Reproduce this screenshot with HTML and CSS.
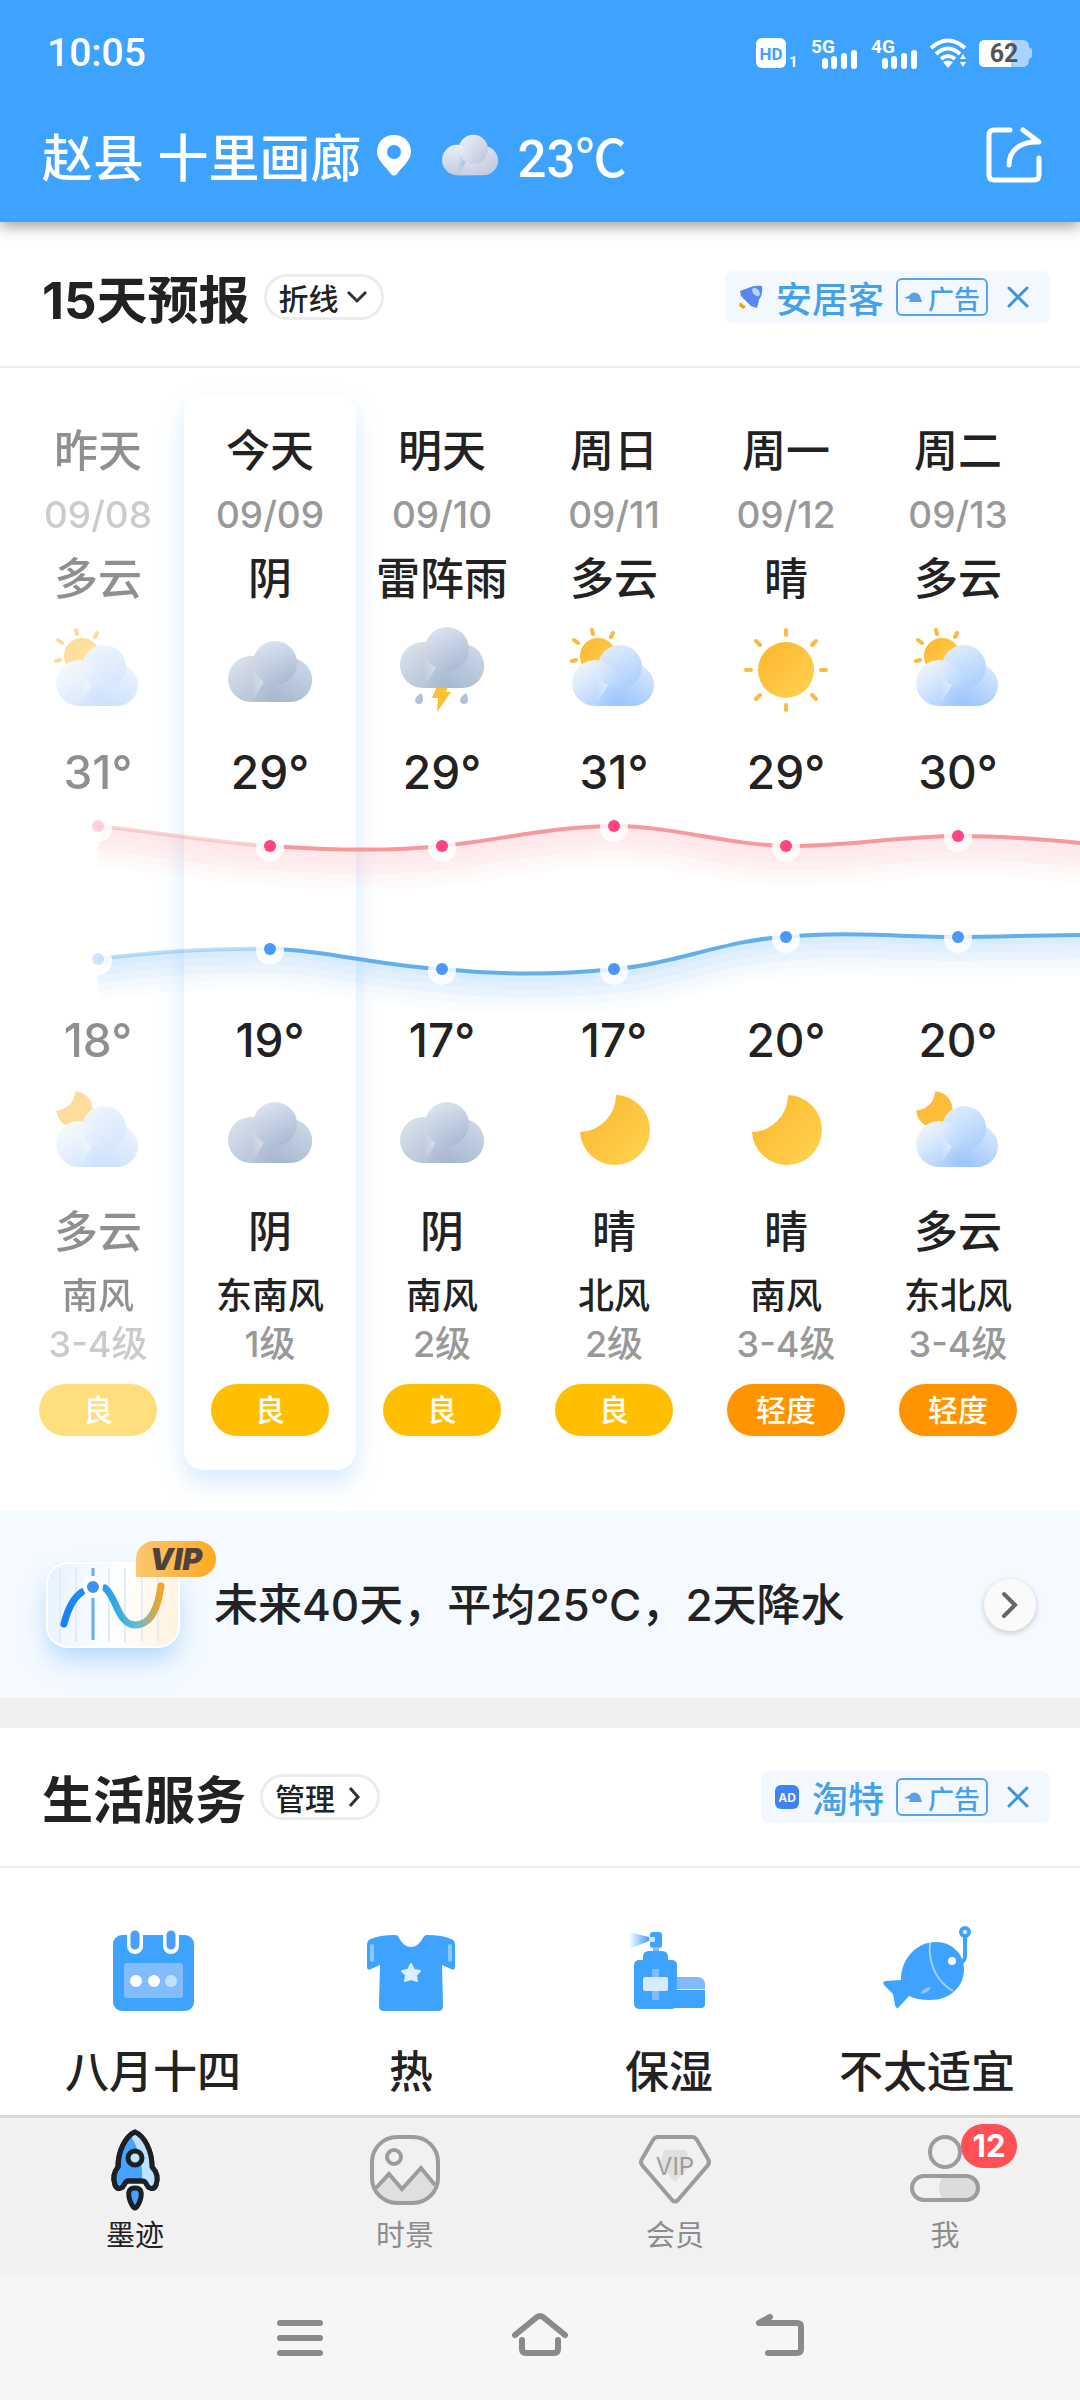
FILE: index.html
```html
<!DOCTYPE html>
<html lang="zh-CN">
<head>
  <meta charset="UTF-8">
  <meta name="viewport" content="width=device-width, initial-scale=1.0">
  <title>15天预报</title>
  <link rel="stylesheet" href="styles.css">
</head>
<body>
  <!-- Shared weather icons -->
  <svg class="sprite" aria-hidden="true">
    <defs>
      <linearGradient id="sun-fill" x1="0" y1="0" x2="1" y2="1">
        <stop offset="0" stop-color="#fdb52c"/>
        <stop offset="1" stop-color="#ffd452"/>
      </linearGradient>
      <linearGradient id="grey-mid" x1="0.3" y1="0" x2="0.7" y2="1">
        <stop offset="0" stop-color="#dbe4f1"/>
        <stop offset="1" stop-color="#a9b9d2"/>
      </linearGradient>
      <linearGradient id="grey-left" gradientUnits="userSpaceOnUse" x1="12" y1="30" x2="52" y2="78">
        <stop offset="0" stop-color="#dae1eb"/>
        <stop offset="1" stop-color="#a8b9d1"/>
      </linearGradient>
      <linearGradient id="grey-right" gradientUnits="userSpaceOnUse" x1="80" y1="34" x2="55" y2="76">
        <stop offset="0" stop-color="#cbd8e7"/>
        <stop offset="1" stop-color="#a8b9d1"/>
      </linearGradient>
      <linearGradient id="left-fade" gradientUnits="userSpaceOnUse" x1="26" y1="0" x2="54" y2="0">
        <stop offset="0" stop-color="#fff"/>
        <stop offset="1" stop-color="#000"/>
      </linearGradient>
      <mask id="soft-left" maskUnits="userSpaceOnUse" x="0" y="0" width="88" height="88">
        <rect width="88" height="88" fill="url(#left-fade)"/>
      </mask>
      <linearGradient id="blue-mid" x1="0.2" y1="0" x2="0.7" y2="1">
        <stop offset="0" stop-color="#e0eefe"/>
        <stop offset="1" stop-color="#abcefd"/>
      </linearGradient>
      <linearGradient id="blue-left" gradientUnits="userSpaceOnUse" x1="16" y1="32" x2="50" y2="82">
        <stop offset="0" stop-color="#f4f5f2"/>
        <stop offset="0.3" stop-color="#dbeafe"/>
        <stop offset="1" stop-color="#9dc5fc"/>
      </linearGradient>
      <linearGradient id="blue-right" gradientUnits="userSpaceOnUse" x1="80" y1="38" x2="55" y2="80">
        <stop offset="0" stop-color="#dcebff"/>
        <stop offset="1" stop-color="#9dc5fc"/>
      </linearGradient>
    </defs>
    <symbol id="cloud" viewBox="0 0 88 88">
      <path d="M26 76H64A22 22 0 1 0 44 45Z" fill="url(#grey-right)"/>
      <circle cx="49" cy="37" r="22" fill="url(#grey-mid)"/>
      <path d="M25 76A23 23 0 1 1 48 53L54 76Z" fill="url(#grey-left)" mask="url(#soft-left)"/>
    </symbol>
    <symbol id="blue-cloud" viewBox="0 0 88 88">
      <path d="M25 80H64A21 21 0 1 0 44 50Z" fill="url(#blue-right)"/>
      <circle cx="50" cy="41" r="22" fill="url(#blue-mid)"/>
      <path d="M25 80A23 23 0 1 1 48 57L56 80Z" fill="url(#blue-left)" mask="url(#soft-left)"/>
    </symbol>
    <symbol id="partly-day" viewBox="0 0 88 88">
      <circle cx="28" cy="30" r="18" fill="url(#sun-fill)"/>
      <path d="M4 14l4 3M22 4l1 4M43 7l-2 4M2 35l4-1" stroke="#fcb941" stroke-width="4" stroke-linecap="round"/>
      <use href="#blue-cloud"/>
    </symbol>
    <symbol id="partly-night" viewBox="0 0 88 88">
      <path transform="translate(-3 0) scale(.52)" d="M46 8A35 35 0 1 1 10 45A37 37 0 0 0 46 8Z" fill="#fdbd3a"/>
      <use href="#blue-cloud"/>
    </symbol>
    <symbol id="moon" viewBox="0 0 88 88">
      <path d="M46 8A35 35 0 1 1 10 45A37 37 0 0 0 46 8Z" fill="url(#sun-fill)"/>
    </symbol>
    <symbol id="sun" viewBox="0 0 88 88">
      <circle cx="44" cy="44" r="28" fill="url(#sun-fill)"/>
      <path d="M44 4v5M44 79v5M4 44h5M79 44h5M14 15l4 4M74 15l-4 4M14 73l4-4M74 73l-4-4" stroke="#fcbc42" stroke-width="4" stroke-linecap="round"/>
    </symbol>
    <symbol id="storm" viewBox="0 0 88 88">
      <path d="M39 60h11l-2 6h5L39 86l1-14h-6Z" fill="#fdc034"/>
      <path d="M23 67c3 5 3 11-2 11s-6-6 2-11ZM68 67c3 5 3 11-2 11s-6-6 2-11Z" fill="#b3c2d6"/>
      <use href="#cloud" y="-14" width="88" height="88"/>
    </symbol>
    <symbol id="hat" viewBox="0 0 18 12">
      <path d="M0 7L6 4C8 0 14 1 16 5L18 11H5L6 8Z" fill="#5b9fe6"/>
    </symbol>
    <symbol id="close" viewBox="0 0 24 24">
      <path d="M3 3l18 18M21 3L3 21" stroke="#3d92dc" stroke-width="3" stroke-linecap="round"/>
    </symbol>
  </svg>

  <header class="top">
    <div class="status">
      <time class="clock">10:05</time>
      <div class="status-icons">
        <svg width="44" height="36" viewBox="0 0 44 36">
          <rect x="0" y="3" width="30" height="30" rx="6" fill="#fff"/>
          <text x="15" y="25" class="t-hd" text-anchor="middle">HD</text>
          <text x="33" y="32" class="t-sim">1</text>
        </svg>
        <svg width="50" height="36" viewBox="0 0 50 36">
          <text x="1" y="18" class="t-net">5G</text>
          <path d="M15 26v5M24 24v7M34 21v10M44 18v13" stroke="#fff" stroke-width="6" stroke-linecap="round"/>
        </svg>
        <svg width="50" height="36" viewBox="0 0 50 36">
          <text x="1" y="18" class="t-net">4G</text>
          <path d="M15 26v5M24 24v7M34 21v10M44 18v13" stroke="#fff" stroke-width="6" stroke-linecap="round"/>
        </svg>
        <svg width="38" height="32" viewBox="0 0 38 32" fill="none" stroke="#fff" stroke-width="4">
          <path d="M1 11Q18-4 35 11M6 17Q18 6 30 17M11 22Q18 16 25 22"/>
          <path d="M13 25Q18 22 23 25L18 31Z" fill="#fff" stroke="none"/>
          <path d="M33 17l3 5h-6ZM33 30l3-5h-6Z" fill="#fff" stroke="none"/>
        </svg>
        <svg width="56" height="32" viewBox="0 0 56 32">
          <path d="M7 3H45q6 0 6 7l3 2v8l-3 2q0 8-6 8H7q-6 0-6-6V9q0-6 6-6Z" fill="#a9d3ff"/>
          <path d="M7 3H33V30H7q-6 0-6-6V9q0-6 6-6Z" fill="#fff"/>
          <text x="26" y="25" class="t-bat" text-anchor="middle">62</text>
        </svg>
      </div>
    </div>
    <div class="place">
      <span class="place-name">赵县 十里画廊</span>
      <svg class="pin" viewBox="0 0 36 42"><path fill-rule="evenodd" d="M18 1C8 1 1 8 1 18C1 26 9 32 15 40Q18 43 21 40C27 32 35 26 35 18C35 8 28 1 18 1ZM18 11A7 7 0 1 1 18 25A7 7 0 1 1 18 11Z" fill="#fff"/></svg>
      <svg class="now-icon" viewBox="2 15 84 61">
        <defs>
          <linearGradient id="now-fill" x1="0" y1="0" x2="1" y2="1">
            <stop offset="0" stop-color="#f2f4fa"/>
            <stop offset="1" stop-color="#b9c3da"/>
          </linearGradient>
          <linearGradient id="now-left" x1="0" y1="0" x2="0" y2="1">
            <stop offset="0" stop-color="#eceff6"/>
            <stop offset="1" stop-color="#c3cbdd"/>
          </linearGradient>
        </defs>
        <path d="M26 76H64A22 22 0 1 0 44 45Z" fill="url(#now-fill)"/>
        <circle cx="49" cy="37" r="22" fill="url(#now-fill)"/>
        <path d="M25 76A23 23 0 1 1 48 53L54 76Z" fill="url(#now-left)" mask="url(#soft-left)"/>
      </svg>
      <span class="now-temp">23℃</span>
      <button class="share" aria-label="分享">
        <svg viewBox="0 0 56 56" fill="none" stroke="#fff" stroke-width="5" stroke-linecap="round" stroke-linejoin="round">
          <path d="M24 3H8q-5 0-5 5V48q0 5 5 5H48q5 0 5-5V31"/>
          <path d="M37 3L53 15C35 14 23 23 23 38"/>
        </svg>
      </button>
    </div>
  </header>

  <main>
    <section class="forecast">
      <div class="section-head">
        <h2>15天预报</h2>
        <button class="chip">折线
          <svg viewBox="0 0 24 24"><path d="M3 7l9 9 9-9"/></svg>
        </button>
        <div class="ad">
          <svg class="ad-icon" viewBox="0 0 24 24">
            <path d="M1 6L9 3Q15 0 23 1Q24 9 20 15L18 23L12 21L2 11Z" fill="#5a86f0"/>
            <ellipse cx="17" cy="7" rx="3" ry="5" transform="rotate(-40 17 7)" fill="#b9d3ff"/>
            <path d="M1 17L7 22L4 24L0 21Z" fill="#f0a51e"/>
          </svg>
          <a href="#">安居客</a>
          <span class="ad-tag"><svg viewBox="0 0 18 12"><use href="#hat"/></svg>广告</span>
          <button class="ad-close" aria-label="关闭"><svg viewBox="0 0 24 24"><use href="#close"/></svg></button>
        </div>
      </div>

      <div class="days">
        <div class="day past">
          <span class="name">昨天</span>
          <span class="date">09/08</span>
          <span class="cond">多云</span>
          <svg class="wx"><use href="#partly-day"/></svg>
          <span class="temp high">31°</span>
          <span class="temp low">18°</span>
          <svg class="wx"><use href="#partly-night"/></svg>
          <span class="cond night">多云</span>
          <span class="wind">南风</span>
          <span class="level">3-4级</span>
          <span class="aqi">良</span>
        </div>
        <div class="day today">
          <span class="name">今天</span>
          <span class="date">09/09</span>
          <span class="cond">阴</span>
          <svg class="wx"><use href="#cloud"/></svg>
          <span class="temp high">29°</span>
          <span class="temp low">19°</span>
          <svg class="wx"><use href="#cloud"/></svg>
          <span class="cond night">阴</span>
          <span class="wind">东南风</span>
          <span class="level">1级</span>
          <span class="aqi">良</span>
        </div>
        <div class="day">
          <span class="name">明天</span>
          <span class="date">09/10</span>
          <span class="cond">雷阵雨</span>
          <svg class="wx"><use href="#storm"/></svg>
          <span class="temp high">29°</span>
          <span class="temp low">17°</span>
          <svg class="wx"><use href="#cloud"/></svg>
          <span class="cond night">阴</span>
          <span class="wind">南风</span>
          <span class="level">2级</span>
          <span class="aqi">良</span>
        </div>
        <div class="day">
          <span class="name">周日</span>
          <span class="date">09/11</span>
          <span class="cond">多云</span>
          <svg class="wx"><use href="#partly-day"/></svg>
          <span class="temp high">31°</span>
          <span class="temp low">17°</span>
          <svg class="wx"><use href="#moon"/></svg>
          <span class="cond night">晴</span>
          <span class="wind">北风</span>
          <span class="level">2级</span>
          <span class="aqi">良</span>
        </div>
        <div class="day">
          <span class="name">周一</span>
          <span class="date">09/12</span>
          <span class="cond">晴</span>
          <svg class="wx"><use href="#sun"/></svg>
          <span class="temp high">29°</span>
          <span class="temp low">20°</span>
          <svg class="wx"><use href="#moon"/></svg>
          <span class="cond night">晴</span>
          <span class="wind">南风</span>
          <span class="level">3-4级</span>
          <span class="aqi light">轻度</span>
        </div>
        <div class="day">
          <span class="name">周二</span>
          <span class="date">09/13</span>
          <span class="cond">多云</span>
          <svg class="wx"><use href="#partly-day"/></svg>
          <span class="temp high">30°</span>
          <span class="temp low">20°</span>
          <svg class="wx"><use href="#partly-night"/></svg>
          <span class="cond night">多云</span>
          <span class="wind">东北风</span>
          <span class="level">3-4级</span>
          <span class="aqi light">轻度</span>
        </div>

        <!-- High / low curves over the day columns -->
        <svg class="chart" viewBox="0 0 1080 220" preserveAspectRatio="none" aria-hidden="true">
          <defs>
            <path id="high-curve" d="M98 22C155 28 213 38 270 42C327 46 385 48 442 42C499 36 557 22 614 22C671 22 729 41 786 42C843 43 901 32 958 32C1000 32 1040 35 1080 39"/>
            <path id="low-curve" d="M98 155C155 148 213 144 270 145C327 146 385 163 442 165C499 171 557 171 614 165C671 161 729 135 786 133C843 127 901 133 958 133C1000 133 1040 131 1080 131"/>
            <linearGradient id="high-line" gradientUnits="userSpaceOnUse" x1="98" y1="0" x2="270" y2="0">
              <stop offset="0" stop-color="#f6989c" stop-opacity=".4"/>
              <stop offset="0.95" stop-color="#f6989c" stop-opacity=".4"/>
              <stop offset="1" stop-color="#f6989c"/>
            </linearGradient>
            <linearGradient id="low-line" gradientUnits="userSpaceOnUse" x1="98" y1="0" x2="270" y2="0">
              <stop offset="0" stop-color="#62aeef" stop-opacity=".4"/>
              <stop offset="0.95" stop-color="#62aeef" stop-opacity=".4"/>
              <stop offset="1" stop-color="#62aeef"/>
            </linearGradient>
          </defs>
          <!-- fading bands under each curve -->
          <g fill="none" stroke="#fb8e92" stroke-width="8">
            <use href="#high-curve" y="4" opacity=".2"/>
            <use href="#high-curve" y="12" opacity=".17"/>
            <use href="#high-curve" y="20" opacity=".13"/>
            <use href="#high-curve" y="28" opacity=".08"/>
            <use href="#high-curve" y="36" opacity=".03"/>
          </g>
          <g fill="none" stroke="#6db4f8" stroke-width="8">
            <use href="#low-curve" y="4" opacity=".26"/>
            <use href="#low-curve" y="12" opacity=".2"/>
            <use href="#low-curve" y="20" opacity=".14"/>
            <use href="#low-curve" y="28" opacity=".08"/>
            <use href="#low-curve" y="36" opacity=".03"/>
          </g>
          <use href="#high-curve" fill="none" stroke="url(#high-line)" stroke-width="4"/>
          <use href="#low-curve" fill="none" stroke="url(#low-line)" stroke-width="4"/>
          <g fill="#fff" opacity=".85">
            <circle cx="98" cy="24" r="14"/><circle cx="270" cy="44" r="14"/><circle cx="442" cy="44" r="14"/>
            <circle cx="614" cy="24" r="14"/><circle cx="786" cy="44" r="14"/><circle cx="958" cy="34" r="14"/>
            <circle cx="98" cy="157" r="14"/><circle cx="270" cy="147" r="14"/><circle cx="442" cy="167" r="14"/>
            <circle cx="614" cy="167" r="14"/><circle cx="786" cy="135" r="14"/><circle cx="958" cy="135" r="14"/>
          </g>
          <g fill="#ff4480">
            <circle cx="98" cy="22" r="6" opacity=".25"/><circle cx="270" cy="42" r="6"/><circle cx="442" cy="42" r="6"/>
            <circle cx="614" cy="22" r="6"/><circle cx="786" cy="42" r="6"/><circle cx="958" cy="32" r="6"/>
          </g>
          <g fill="#4a98fd">
            <circle cx="98" cy="155" r="6" opacity=".25"/><circle cx="270" cy="145" r="6"/><circle cx="442" cy="165" r="6"/>
            <circle cx="614" cy="165" r="6"/><circle cx="786" cy="133" r="6"/><circle cx="958" cy="133" r="6"/>
          </g>
        </svg>
      </div>

      <a class="banner" href="#">
        <span class="trend">
          <svg viewBox="0 0 130 82" fill="none">
            <defs>
              <linearGradient id="trend-line" gradientUnits="userSpaceOnUse" x1="16" y1="0" x2="113" y2="0">
                <stop offset="0" stop-color="#1b7ff5"/>
                <stop offset="0.45" stop-color="#2a9fee"/>
                <stop offset="0.75" stop-color="#5cc0cf"/>
                <stop offset="1" stop-color="#f5a425"/>
              </linearGradient>
            </defs>
            <path d="M12 4V78M28 4V78M61 4V78M77 4V78M94 4V78M110 4V78" stroke="#e3ebf5" stroke-width="2"/>
            <path d="M45 4V12M45 34V76" stroke="#63aef5" stroke-width="3"/>
            <path d="M16 60C19 48 25 34 34 28M57 24C68 32 70 61 87 61C104 61 110 42 113 22" stroke="url(#trend-line)" stroke-width="7" stroke-linecap="round"/>
            <circle cx="45" cy="23" r="8" fill="#3c93ef" stroke="#fff" stroke-width="4"/>
          </svg>
          <span class="vip">VIP</span>
        </span>
        <span class="banner-text">未来40天，平均25℃，2天降水</span>
        <span class="go"><svg viewBox="0 0 24 32"><path d="M6 5l11 11L6 27"/></svg></span>
      </a>
    </section>

    <section class="life">
      <div class="section-head">
        <h2>生活服务</h2>
        <button class="chip">管理
          <svg viewBox="0 0 24 24"><path d="M9 3l8 9-8 9"/></svg>
        </button>
        <div class="ad">
          <svg class="ad-icon" viewBox="0 0 24 24">
            <rect width="24" height="24" rx="6" fill="#3d83f5"/>
            <text x="12" y="17" class="t-ad" text-anchor="middle">AD</text>
          </svg>
          <a href="#">淘特</a>
          <span class="ad-tag"><svg viewBox="0 0 18 12"><use href="#hat"/></svg>广告</span>
          <button class="ad-close" aria-label="关闭"><svg viewBox="0 0 24 24"><use href="#close"/></svg></button>
        </div>
      </div>
      <div class="services">
        <a href="#">
          <svg viewBox="0 0 88 88">
            <rect x="4" y="8" width="81" height="76" rx="9" fill="#3ea2ff"/>
            <path d="M26 6V19M62 6V19" stroke="#fff" stroke-width="16" stroke-linecap="round"/>
            <path d="M26 8V18M62 8V18" stroke="#4a9ef5" stroke-width="9" stroke-linecap="round"/>
            <rect x="15" y="36" width="59" height="35" rx="3" fill="#82bcfb"/>
            <circle cx="27" cy="54" r="6" fill="#fff"/>
            <circle cx="45" cy="54" r="6" fill="#fff"/>
            <circle cx="62" cy="54" r="6" fill="#bfe0ff"/>
          </svg>
          八月十四
        </a>
        <a href="#">
          <svg viewBox="0 0 88 88">
            <path d="M28 8Q31 8 32 11Q37 20 44 20Q51 20 56 11Q57 8 60 8Q76 8 84 12Q88 13 88 18V40Q88 44 84 42L75 38L76 79Q76 84 71 84H17Q12 84 12 79L13 38L4 42Q0 44 0 40V18Q0 13 4 12Q12 8 28 8Z" fill="#3ea2ff"/>
            <path d="M5 19V33M83 19V33" stroke="#8cc7ff" stroke-width="4" stroke-linecap="round"/>
            <path d="M44 37L47 43L53 44L49 48L50 54L44 52L38 54L39 48L35 44L41 43Z" fill="#dceeff" stroke="#dceeff" stroke-width="2" stroke-linejoin="round"/>
          </svg>
          热
        </a>
        <a href="#">
          <svg viewBox="0 0 88 88">
            <defs>
              <linearGradient id="mist" x1="0" y1="0" x2="1" y2="0">
                <stop offset="0" stop-color="#3ea2ff" stop-opacity="0"/>
                <stop offset="1" stop-color="#3ea2ff"/>
              </linearGradient>
            </defs>
            <path d="M24 10L4 5V22L24 14Z" fill="url(#mist)"/>
            <rect x="25" y="5" width="12" height="16" rx="3" fill="#3ea2ff"/>
            <rect x="24" y="10" width="6" height="5" rx="1" fill="#cfe6ff"/>
            <rect x="28" y="20" width="6" height="5" fill="#7dbcff"/>
            <path d="M18 34V30Q18 24 24 24H37Q43 24 43 30V34Z" fill="#3ea2ff"/>
            <path d="M48 50H72Q80 50 80 58V62H48Z" fill="#80b9fb"/>
            <path d="M48 63H80V77Q80 81 76 81H48Z" fill="#3ea2ff"/>
            <rect x="9" y="33" width="43" height="49" rx="5" fill="#3ea2ff"/>
            <rect x="27" y="42" width="7" height="31" fill="#7dbcff"/>
            <rect x="18" y="50" width="25" height="14" rx="2" fill="#d8eafd"/>
          </svg>
          保湿
        </a>
        <a href="#">
          <svg viewBox="0 0 88 88">
            <path d="M18 53C18 31 34 15 53 15C69 15 81 27 81 42C81 60 67 73 47 73Q34 73 26 69L16 80Q13 83 12 78L10 67L1 58Q-1 54 3 54Z" fill="#3ea2ff"/>
            <path d="M47 16C45 37 54 55 70 64" fill="none" stroke="#9fd0ff" stroke-width="2"/>
            <path d="M37 67Q41 60 48 60Q45 67 37 67Z" fill="#8cc6ff"/>
            <circle cx="69" cy="34" r="4" fill="#fff"/>
            <circle cx="82" cy="5" r="4" fill="none" stroke="#3ea2ff" stroke-width="4"/>
            <path d="M82 9V29Q82 35 76 36" fill="none" stroke="#3ea2ff" stroke-width="4"/>
          </svg>
          不太适宜
        </a>
      </div>
    </section>
  </main>

  <nav class="tabs">
    <a class="tab active" href="#">
      <svg viewBox="0 0 84 84" stroke="#1b1f26" stroke-width="5" stroke-linejoin="round">
        <path d="M42 4C33 8 25 22 25 39C20 45 20 51 22 57C24 62 29 61 31 57Q33 53 35 53H50Q52 53 54 57C56 61 61 62 63 57C65 51 65 45 59 39C59 22 51 8 42 4Z" fill="#45a4ff"/>
        <path d="M38 8C45 20 50 35 49 51Q52 52 54 56C57 60 61 59 62 55C63 49 62 45 58 39C57 23 51 10 42 6Z" fill="#bfe2ff" stroke="none"/>
        <path d="M42 4C33 8 25 22 25 39C20 45 20 51 22 57C24 62 29 61 31 57Q33 53 35 53H50Q52 53 54 57C56 61 61 62 63 57C65 51 65 45 59 39C59 22 51 8 42 4Z" fill="none"/>
        <circle cx="42" cy="30" r="7" fill="#bfe2ff"/>
        <path d="M42 60C48 60 49 64 48 69C47 74 44 80 42 80C40 80 37 74 36 69C35 64 36 60 42 60Z" fill="#45a4ff"/>
      </svg>
      墨迹
    </a>
    <a class="tab" href="#">
      <svg viewBox="0 0 84 84" fill="none" stroke="#9c9c9c" stroke-width="4">
        <path d="M14 60L26 46L39 61L58 40L72 57Q68 74 52 74H32Q19 74 14 60Z" fill="#dfdfdf" stroke="none"/>
        <rect x="9" y="9" width="66" height="66" rx="25"/>
        <circle cx="31" cy="29" r="7"/>
        <path d="M13 60L26 46L39 61L58 40L72 57"/>
      </svg>
      时景
    </a>
    <a class="tab" href="#">
      <svg viewBox="0 0 84 84">
        <path d="M31 22H53L58 36L42 54L27 37Z" fill="#e0e0e0"/>
        <path d="M25 9H59Q62 9 64 12L75 31Q77 34 75 37L45 72Q42 75 39 72L9 37Q7 34 9 31L20 12Q22 9 25 9Z" fill="none" stroke="#9c9c9c" stroke-width="4"/>
        <text x="42" y="47" class="t-vip" text-anchor="middle">VIP</text>
      </svg>
      会员
    </a>
    <a class="tab" href="#">
      <svg viewBox="0 0 84 84" fill="none" stroke="#9c9c9c" stroke-width="4">
        <circle cx="42" cy="24" r="15"/>
        <path d="M40 48Q32 60 40 72H62Q74 70 74 60Q74 48 62 48Z" fill="#dcdcdc" stroke="none"/>
        <rect x="9" y="48" width="66" height="24" rx="12"/>
      </svg>
      我
      <span class="badge">12</span>
    </a>
  </nav>

  <div class="sysnav">
    <button aria-label="最近任务"><svg viewBox="0 0 64 64"><path d="M12 17H52M12 32H52M12 47H52"/></svg></button>
    <button aria-label="主页"><svg viewBox="0 0 64 64"><path d="M7 29L29 11Q32 9 35 11L57 29M14 34V43Q14 47 18 47H46Q50 47 50 43V34"/></svg></button>
    <button aria-label="返回"><svg viewBox="0 0 64 64"><path d="M22 11L11 17H49Q53 17 53 21V43Q53 47 49 47H20"/></svg></button>
  </div>
</body>
</html>
```
FILE: styles.css
```css
* {
  box-sizing: border-box;
}

body {
  margin: 0;
  min-height: 100vh;
  display: flex;
  flex-direction: column;
  font-family: Inter, "Noto Sans CJK SC", sans-serif;
  font-weight: 500;
  color: #222;
  background-color: #fff;
}

a {
  color: inherit;
  text-decoration: none;
}

button {
  font: inherit;
  color: inherit;
  background: none;
  border: none;
  padding: 0;
  cursor: pointer;
}

svg {
  display: block;
  flex: none;
}

.sprite {
  position: absolute;
  width: 0;
  height: 0;
}

main {
  flex: 1;
}

/* Header */
.top {
  position: relative;
  z-index: 1;
  padding: 0 38px 18px 42px;
  color: #fff;
  background-color: #3ea2ff;
  box-shadow: 0 4px 14px rgba(0, 0, 0, 0.4);
}

.status {
  display: flex;
  align-items: center;
  justify-content: space-between;
  height: 106px;
}

.clock {
  font-family: Roboto, sans-serif;
  font-size: 39px;
  margin-left: 5px;
}

.status-icons {
  display: flex;
  align-items: center;
  gap: 10px;
  margin-right: 8px;
}

.status-icons svg {
  overflow: visible;
}

.t-hd {
  font: bold 17px Roboto, sans-serif;
  fill: #3ea2ff;
}

.t-sim {
  font: bold 15px Roboto, sans-serif;
  fill: #fff;
}

.t-net {
  font: bold 19px Roboto, sans-serif;
  fill: #fff;
}

.t-bat {
  font: bold 25px Roboto, sans-serif;
  fill: #555;
}

.t-ad {
  font: bold 12px Inter, sans-serif;
  fill: #fff3cc;
}

.t-vip {
  font: 24px Inter, sans-serif;
  fill: #9c9c9c;
}

.place {
  display: flex;
  align-items: center;
  height: 98px;
}

.place-name {
  font-size: 51px;
}

.pin {
  width: 36px;
  height: 42px;
  margin-left: 14px;
}

.now-icon {
  width: 56px;
  height: 42px;
  margin: 0 20px 0 30px;
}

.now-temp {
  font-family: Roboto, "Noto Sans CJK SC", sans-serif;
  font-size: 51px;
}

.share {
  margin-left: auto;
}

.share svg {
  width: 56px;
  height: 56px;
}

/* Section heading */
.section-head {
  display: flex;
  align-items: center;
  height: 140px;
  padding: 0 30px 0 42px;
  border-bottom: 2px solid #eee;
}

.section-head h2 {
  margin: 0;
  font-size: 51px;
  font-weight: 700;
}

.chip {
  display: flex;
  align-items: center;
  justify-content: space-between;
  width: 120px;
  height: 46px;
  margin-left: 14px;
  padding: 0 12px;
  font-size: 30px;
  border: 3px solid #ececec;
  border-radius: 23px;
}

.chip svg {
  width: 24px;
  height: 24px;
}

.chip path {
  fill: none;
  stroke: #333;
  stroke-width: 3;
}

.ad {
  display: flex;
  align-items: center;
  height: 52px;
  margin-left: auto;
  padding: 0 20px 0 14px;
  font-size: 36px;
  color: #45a0ea;
  background-color: #f3f8fe;
  border-radius: 8px;
}

.ad-icon {
  width: 24px;
  height: 24px;
  margin-right: 13px;
}

.ad-tag {
  display: flex;
  align-items: center;
  justify-content: center;
  gap: 6px;
  width: 92px;
  height: 38px;
  margin: 0 18px 0 12px;
  font-size: 26px;
  border: 2px solid #5aa3e6;
  border-radius: 6px;
}

.ad-tag svg {
  width: 18px;
  height: 12px;
}

.ad-close svg {
  width: 24px;
  height: 24px;
}

/* Forecast */
.forecast {
  padding-top: 6px;
}

.days {
  position: relative;
  display: grid;
  grid-template-columns: repeat(6, 1fr);
  padding: 27px 36px 41px 12px;
}

.day {
  display: flex;
  flex-direction: column;
  align-items: center;
  padding: 24px 0 34px;
  white-space: nowrap;
}

.today {
  border-radius: 20px;
  background-color: #fff;
  box-shadow: 0 12px 24px rgba(100, 180, 255, 0.28);
}

.name,
.date,
.cond,
.temp {
  font-size: 44px;
  line-height: 64px;
}

.date,
.level {
  font-size: 37px;
  color: #999;
}

.cond.night {
  margin: 25px 0 8px;
}

.wx {
  width: 88px;
  height: 88px;
  margin-top: 15px;
}

.temp {
  font-size: 46px;
}

.high {
  margin-top: 26px;
  margin-bottom: 204px;
}

.wind,
.level {
  font-size: 36px;
  line-height: 48px;
}

.aqi {
  width: 118px;
  margin-top: 16px;
  font-size: 30px;
  line-height: 52px;
  text-align: center;
  color: #fff;
  background-color: #ffbf00;
  border-radius: 26px;
}

.aqi.light {
  background-color: #ff9400;
}

.past > * {
  opacity: 0.5;
}

.chart {
  position: absolute;
  left: 0;
  top: 436px;
  width: 100%;
  height: 220px;
}

/* 40-day banner */
.banner {
  display: flex;
  align-items: center;
  height: 187px;
  padding: 0 44px 0 48px;
  background-color: #f4faff;
}

.trend {
  position: relative;
  width: 130px;
  height: 82px;
  margin-right: 36px;
  border-radius: 20px;
  background-image: linear-gradient(100deg, #e6f2ff, #fff 55%, #fff1dc);
  box-shadow: 0 0 0 2px #fff, 0 14px 24px rgba(90, 170, 250, 0.4);
}

.vip {
  position: absolute;
  left: 88px;
  top: -23px;
  width: 80px;
  height: 36px;
  font-size: 30px;
  font-weight: 900;
  font-style: italic;
  line-height: 36px;
  text-align: center;
  color: #4c4240;
  background-image: linear-gradient(90deg, #fcc675, #ffa91f);
  border-radius: 18px 18px 18px 0;
}

.banner-text {
  font-size: 44px;
  line-height: 64px;
}

.go {
  display: flex;
  align-items: center;
  justify-content: center;
  width: 52px;
  height: 52px;
  margin-left: auto;
  border-radius: 50%;
  background-color: #fafafa;
  box-shadow: 0 2px 6px rgba(0, 0, 0, 0.2);
}

.go svg {
  width: 24px;
  height: 32px;
}

.go path {
  fill: none;
  stroke: #666;
  stroke-width: 4;
  stroke-linecap: round;
}

/* Life services */
.life {
  border-top: 30px solid #efefef;
}

.services {
  display: grid;
  grid-template-columns: repeat(4, 1fr);
  padding: 59px 24px 11px;
}

.services a {
  display: flex;
  flex-direction: column;
  align-items: center;
  gap: 25px;
  font-size: 44px;
  line-height: 64px;
}

.services svg {
  width: 88px;
  height: 88px;
  overflow: visible;
}

/* Bottom tabs */
.tabs {
  display: grid;
  grid-template-columns: repeat(4, 1fr);
  height: 160px;
  padding-top: 10px;
  background-color: #f1f1f2;
  border-top: 3px solid #dadada;
}

.tab {
  position: relative;
  display: flex;
  flex-direction: column;
  align-items: center;
  gap: 2px;
  font-size: 29px;
  font-weight: 400;
  line-height: 44px;
  color: #8c8c8c;
}

.tab.active {
  color: #222;
}

.tab svg {
  width: 84px;
  height: 84px;
}

.badge {
  position: absolute;
  left: calc(50% + 16px);
  top: -4px;
  width: 56px;
  font-size: 31px;
  font-weight: 700;
  text-align: center;
  color: #fff;
  background-color: #ff5056;
  border-radius: 22px;
}

/* System navigation */
.sysnav {
  display: flex;
  align-items: center;
  justify-content: center;
  gap: 176px;
  height: 126px;
  background-color: #f6f6f6;
}

.sysnav svg {
  width: 64px;
  height: 64px;
}

.sysnav path {
  fill: none;
  stroke: #8a8a8a;
  stroke-width: 6;
  stroke-linecap: round;
  stroke-linejoin: round;
}
```
